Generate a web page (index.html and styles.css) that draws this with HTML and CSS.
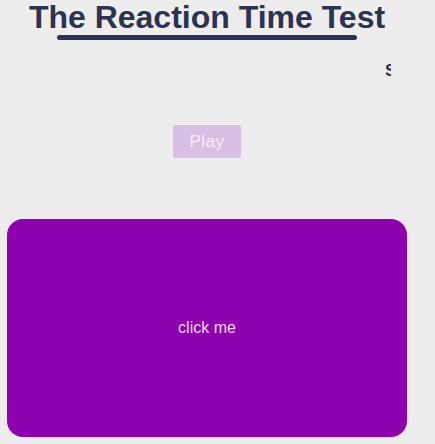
FILE: index.html
```html
<!DOCTYPE html>
<html>
<head>
<meta charset="utf-8">
<link rel="stylesheet" href="styles.css">
</head>
<body>
<div class="app">
  <header class="header">
    <h1 class="title">The Reaction Time Test</h1>
    <div class="underline"></div>
  </header>
  <div class="score-row"><span class="score">Score: 0</span></div>
  <div class="controls"><button class="play">Play</button></div>
  <div class="target">click me</div>
</div>
</body>
</html>
```
FILE: styles.css
```css
html, body {
  margin: 0;
  padding: 0;
  background: #ededed;
}
body {
  font-family: "Liberation Sans", Arial, sans-serif;
  width: 435px;
  height: 444px;
  overflow: hidden;
}
.app {
  width: 414px;
  display: flex;
  flex-direction: column;
  align-items: center;
}
.header {
  display: flex;
  flex-direction: column;
  align-items: center;
}
.title {
  margin: 0;
  font-size: 32px;
  font-weight: bold;
  color: #2b3350;
  line-height: 34px;
  white-space: nowrap;
}
.underline {
  width: 300px;
  height: 5px;
  border-radius: 3px;
  background: #2b3350;
  margin-top: 1px;
}
.score-row {
  align-self: stretch;
  width: 391px;
  padding-left: 385px;
  box-sizing: border-box;
  overflow: hidden;
  white-space: nowrap;
  margin-top: 21px;
  height: 20px;
}
.score {
  font-weight: bold;
  font-size: 17px;
  color: #2b3350;
  line-height: 20px;
}
.controls {
  margin-top: 44px;
}
.play {
  width: 68px;
  height: 33px;
  border: none;
  border-radius: 2px;
  background: #d9bfe3;
  color: #f6eef8;
  font-family: "Liberation Sans", Arial, sans-serif;
  font-size: 17px;
  letter-spacing: 0.5px;
  padding: 0;
}
.target {
  margin-top: 61px;
  width: 400px;
  height: 218px;
  border-radius: 16px;
  background: #8e00b0;
  color: #f3d9f5;
  font-size: 16px;
  display: flex;
  align-items: center;
  justify-content: center;
}
```
